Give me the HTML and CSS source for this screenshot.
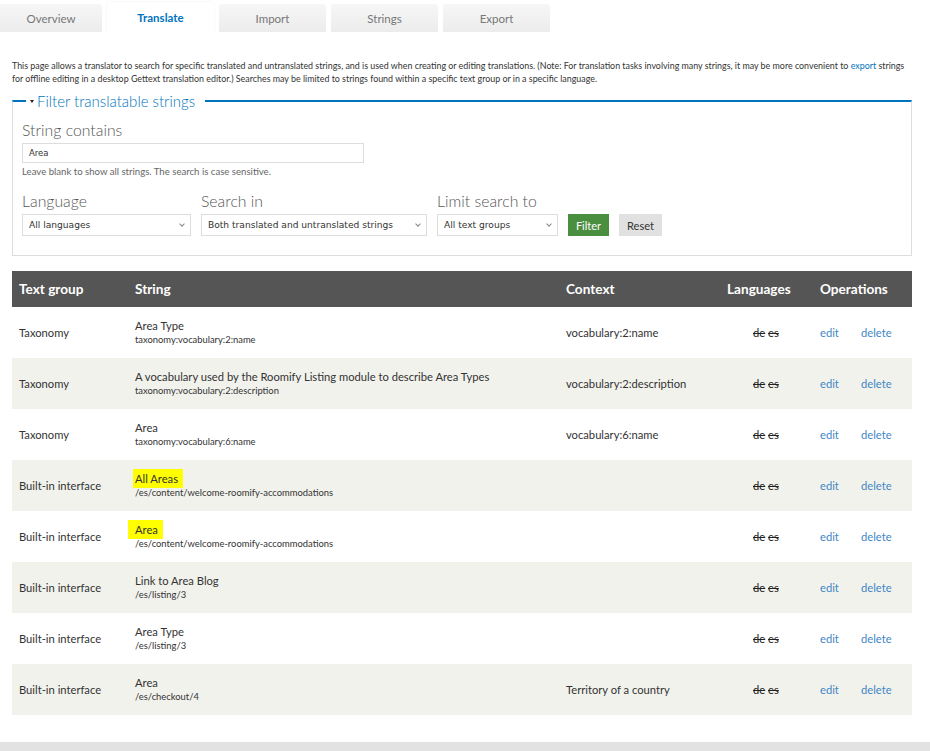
FILE: index.html
```html
<!DOCTYPE html>
<html>
<head>
<meta charset="utf-8">
<link rel="stylesheet" href="styles.css">
</head>
<body>
<div class="page">
  <ul class="tabs">
    <li class="tab first">Overview</li>
    <li class="tab active">Translate</li>
    <li class="tab">Import</li>
    <li class="tab">Strings</li>
    <li class="tab">Export</li>
  </ul>
  <div class="content">
    <p class="intro">This page allows a translator to search for specific translated and untranslated strings, and is used when creating or editing translations. (Note: For translation tasks involving many strings, it may be more convenient to <a href="#">export</a> strings for offline editing in a desktop Gettext translation editor.) Searches may be limited to strings found within a specific text group or in a specific language.</p>
    <fieldset class="filter">
      <legend><span class="arrow"></span>Filter translatable strings</legend>
      <div class="field">
        <label class="lbl">String contains</label>
        <div class="input">Area</div>
        <div class="desc">Leave blank to show all strings. The search is case sensitive.</div>
      </div>
      <div class="row">
        <div class="field">
          <label class="lbl">Language</label>
          <div class="select w1">All languages<span class="caret"></span></div>
        </div>
        <div class="field">
          <label class="lbl">Search in</label>
          <div class="select w2">Both translated and untranslated strings<span class="caret"></span></div>
        </div>
        <div class="field">
          <label class="lbl">Limit search to</label>
          <div class="select w3">All text groups<span class="caret"></span></div>
        </div>
        <button class="btn filter-btn">Filter</button>
        <button class="btn reset-btn">Reset</button>
      </div>
    </fieldset>

    <table class="strings">
      <colgroup>
        <col class="c1"><col class="c2"><col class="c3"><col class="c4"><col class="c5"><col class="c6">
      </colgroup>
      <thead>
        <tr><th>Text group</th><th>String</th><th>Context</th><th>Languages</th><th colspan="2">Operations</th></tr>
      </thead>
      <tbody>
        <tr><td>Taxonomy</td><td><div>Area Type</div><div class="loc">taxonomy:vocabulary:2:name</div></td><td>vocabulary:2:name</td><td class="lang"><del>de</del> <del>es</del></td><td><a href="#">edit</a></td><td><a href="#">delete</a></td></tr>
        <tr class="even"><td>Taxonomy</td><td><div>A vocabulary used by the Roomify Listing module to describe Area Types</div><div class="loc">taxonomy:vocabulary:2:description</div></td><td>vocabulary:2:description</td><td class="lang"><del>de</del> <del>es</del></td><td><a href="#">edit</a></td><td><a href="#">delete</a></td></tr>
        <tr><td>Taxonomy</td><td><div>Area</div><div class="loc">taxonomy:vocabulary:6:name</div></td><td>vocabulary:6:name</td><td class="lang"><del>de</del> <del>es</del></td><td><a href="#">edit</a></td><td><a href="#">delete</a></td></tr>
        <tr class="even"><td>Built-in interface</td><td><div><span class="hl">All Areas</span></div><div class="loc">/es/content/welcome-roomify-accommodations</div></td><td></td><td class="lang"><del>de</del> <del>es</del></td><td><a href="#">edit</a></td><td><a href="#">delete</a></td></tr>
        <tr><td>Built-in interface</td><td><div><span class="hl hl2">Area</span></div><div class="loc">/es/content/welcome-roomify-accommodations</div></td><td></td><td class="lang"><del>de</del> <del>es</del></td><td><a href="#">edit</a></td><td><a href="#">delete</a></td></tr>
        <tr class="even"><td>Built-in interface</td><td><div>Link to Area Blog</div><div class="loc">/es/listing/3</div></td><td></td><td class="lang"><del>de</del> <del>es</del></td><td><a href="#">edit</a></td><td><a href="#">delete</a></td></tr>
        <tr><td>Built-in interface</td><td><div>Area Type</div><div class="loc">/es/listing/3</div></td><td></td><td class="lang"><del>de</del> <del>es</del></td><td><a href="#">edit</a></td><td><a href="#">delete</a></td></tr>
        <tr class="even"><td>Built-in interface</td><td><div>Area</div><div class="loc">/es/checkout/4</div></td><td>Territory of a country</td><td class="lang"><del>de</del> <del>es</del></td><td><a href="#">edit</a></td><td><a href="#">delete</a></td></tr>
      </tbody>
    </table>
  </div>
  <div class="footer-bar"></div>
</div>
</body>
</html>
```

FILE: styles.css
```css
html, body {
  margin: 0;
  padding: 0;
  background: #fff;
}
body {
  font-family: Lato, "Open Sans", sans-serif;
  color: #333;
  width: 930px;
  height: 751px;
  overflow: hidden;
}
.page {
  display: flex;
  flex-direction: column;
  height: 751px;
}
.tabs {
  list-style: none;
  margin: 0;
  padding: 4px 0 0 0;
  display: flex;
  gap: 5px;
  height: 28px;
}
.tab {
  width: 107px;
  height: 28px;
  flex: none;
  background: linear-gradient(#f6f6f6, #ececec);
  border-radius: 3px 3px 0 0;
  color: #777;
  font-size: 11.5px;
  display: flex;
  align-items: center;
  justify-content: center;
}
.tab.first {
  margin-left: -5px;
  padding-left: 5px;
  box-sizing: border-box;
}
.tab.active {
  background: #fff;
  color: #0074bd;
  font-weight: bold;
  margin-top: -2px;
  height: 30px;
  box-shadow: 0 0 2px rgba(0,0,0,0.08);
  clip-path: inset(-3px -3px 0 -3px);
}
.content {
  padding: 0 18px 0 12px;
  flex: 1;
}
.intro {
  font-size: 8.9px;
  line-height: 13px;
  margin: 27px 2px 7px 0;
  color: #333;
}
.intro a {
  color: #0074bd;
  text-decoration: none;
}
.filter {
  border: 1px solid #ddd;
  border-top: 2px solid #0074bd;
  margin: 0;
  padding: 11px 9px 15px 9px;
  height: 164px;
  box-sizing: border-box;
}
.filter legend {
  color: #0074bd;
  font-size: 15px;
  font-weight: 300;
  padding: 0 10px 0 4px;
  margin-left: 4px;
  line-height: 18px;
}
.arrow {
  display: inline-block;
  width: 0;
  height: 0;
  border-left: 2.5px solid transparent;
  border-right: 2.5px solid transparent;
  border-top: 3px solid #222;
  margin-right: 3px;
  vertical-align: 4px;
}
.lbl {
  display: block;
  font-size: 15.8px;
  font-weight: 300;
  color: #555;
  line-height: 18px;
  margin-bottom: 4px;
}
.input {
  width: 342px;
  height: 20px;
  box-sizing: border-box;
  border: 1px solid #ddd;
  font-family: "DejaVu Sans", sans-serif;
  font-size: 8.5px;
  line-height: 18px;
  padding-left: 6px;
  color: #333;
}
.desc {
  font-size: 9.6px;
  color: #666;
  margin-top: 3px;
  line-height: 12px;
}
.row {
  display: flex;
  align-items: flex-end;
  margin-top: 14px;
  gap: 10px;
}
.select {
  position: relative;
  height: 22px;
  box-sizing: border-box;
  border: 1px solid #ddd;
  font-family: "DejaVu Sans", sans-serif;
  font-size: 9.1px;
  line-height: 20px;
  padding-left: 6px;
  color: #333;
  background: #fff;
}
.w1 { width: 169px; }
.w2 { width: 226px; }
.w3 { width: 121px; }
.caret {
  position: absolute;
  right: 6px;
  top: 7px;
  width: 3px;
  height: 3px;
  border-right: 1px solid #888;
  border-bottom: 1px solid #888;
  transform: rotate(45deg);
}
.btn {
  height: 22px;
  border: none;
  font-family: Lato, sans-serif;
  font-size: 11px;
  padding: 0 7px;
  border-radius: 0;
  margin-right: 0;
}
.filter-btn {
  background: #4a8e3f;
  color: #fff;
  width: 41px;
}
.reset-btn {
  background: #e1e1e1;
  color: #333;
  width: 43px;
}
.strings {
  margin-top: 15px;
  width: 900px;
  border-collapse: collapse;
  table-layout: fixed;
  font-size: 11.2px;
}
.c1 { width: 116px; }
.c2 { width: 431px; }
.c3 { width: 161px; }
.c4 { width: 93px; }
.c5 { width: 41px; }
.c6 { width: 58px; }
.strings th {
  background: #555;
  color: #fff;
  font-size: 13.6px;
  font-weight: bold;
  text-align: left;
  height: 36px;
  padding: 0 0 0 7px;
}
.strings td {
  height: 51px;
  padding: 0 0 0 7px;
  vertical-align: middle;
  color: #333;
  line-height: 14px;
}
.strings tr.even td {
  background: #f2f2ed;
}
.loc {
  font-size: 9.4px;
  line-height: 13px;
}
.lang {
  text-align: left;
  padding-left: 33px !important;
}
.lang del {
  color: #222;
}
.strings a {
  color: #3f86c6;
  text-decoration: none;
}
.hl {
  background: #ffff00;
  padding: 3px 5px 3px 2px;
  margin-left: -2px;
}
.hl2 {
  padding-left: 7px;
  margin-left: -7px;
}
.footer-bar {
  height: 9px;
  background: #e2e2e2;
}
```
